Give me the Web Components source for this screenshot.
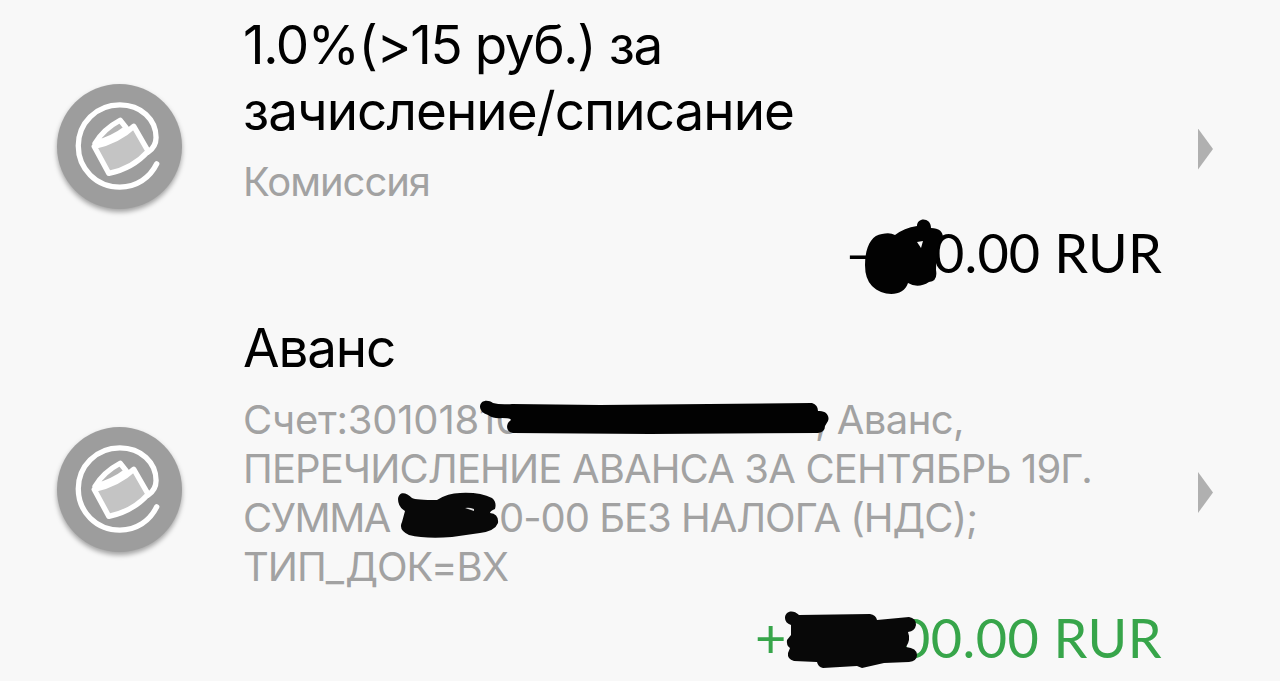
<!DOCTYPE html>
<html lang="ru">
<head>
<meta charset="utf-8">
<title>Операции</title>
<style>
body {
  margin: 0;
  background: #f8f8f8;
  font-family: Inter, "Liberation Sans", sans-serif;
  overflow: hidden;
}
</style>
</head>
<body>
<operation-list>
  <operation-row>
    <fit-line slot="title" width="419">1.0%(&gt;15 руб.) за</fit-line>
    <fit-line slot="title" width="551">зачисление/списание</fit-line>
    <fit-line slot="details" width="187">Комиссия</fit-line>
    <fit-line slot="amount" width="23">–</fit-line>
    <ink-gap slot="amount" width="65"></ink-gap>
    <fit-line slot="amount" width="229">0.00 RUR</fit-line>
  </operation-row>
  <operation-row income style="--title-gap: 14px">
    <fit-line slot="title" width="152">Аванс</fit-line>
    <text-line slot="details">
      <fit-line width="236">Счет:301018</fit-line>
      <fit-line width="42">10</fit-line>
      <ink-gap width="294"></ink-gap>
      <fit-line width="149">, Аванс,</fit-line>
    </text-line>
    <fit-line slot="details" width="849">ПЕРЕЧИСЛЕНИЕ АВАНСА ЗА СЕНТЯБРЬ 19Г.</fit-line>
    <text-line slot="details">
      <fit-line width="147">СУММА</fit-line>
      <ink-gap width="109"></ink-gap>
      <fit-line width="478">0-00 БЕЗ НАЛОГА (НДС);</fit-line>
    </text-line>
    <fit-line slot="details" width="265">ТИП_ДОК=ВХ</fit-line>
    <fit-line slot="amount" width="34">+</fit-line>
    <ink-gap slot="amount" width="110"></ink-gap>
    <fit-line slot="amount" width="263">00.00 RUR</fit-line>
  </operation-row>
  <ink-strokes slot="overlay"></ink-strokes>
</operation-list>

<script>
const attach = (el, css, html) => {
  const shadow = el.attachShadow({ mode: "open" });
  shadow.innerHTML = `<style>${css}</style>${html}`;
  return shadow;
}

class OperationList extends HTMLElement {
  connectedCallback() {
    attach(this, `
:host {
  display: flex;
  flex-direction: column;
  gap: 10px;
  position: relative;
  width: 1280px;
  height: 681px;
  overflow: hidden;
}
`, `<slot></slot><slot name="overlay"></slot>`);
  }
}

class OperationRow extends HTMLElement {
  connectedCallback() {
    attach(this, `
:host {
  display: grid;
  grid-template-columns: 243px 919px 1fr;
  align-items: center;
  color: #000;
  --amount: #000;
}
:host([income]) {
  --amount: #37a54a;
}
wallet-icon {
  margin-left: 57px;
}
.body {
  display: flex;
  flex-direction: column;
  padding: 12px 0 6px;
}
.title {
  display: flex;
  flex-direction: column;
  font-size: 53px;
  line-height: 66px;
}
:host([income]) .title {
  padding-top: 1px;
}
.details {
  display: flex;
  flex-direction: column;
  margin-top: var(--title-gap, 13px);
  font-size: 40px;
  line-height: 49px;
  color: #a2a2a2;
}
.amount {
  display: flex;
  justify-content: flex-end;
  margin-top: 14px;
  font-family: Lato, Inter, sans-serif;
  font-size: 54px;
  line-height: 66px;
  color: var(--amount);
}
.arrow {
  width: 15px;
  height: 41px;
  margin: 6px 0 0 36px;
  background: #b0b0b0;
  clip-path: polygon(0 0, 100% 50%, 0 100%);
}
`, `
<wallet-icon></wallet-icon>
<div class="body">
  <div class="title"><slot name="title"></slot></div>
  <div class="details"><slot name="details"></slot></div>
  <div class="amount"><slot name="amount"></slot></div>
</div>
<div class="arrow"></div>
`);
  }
}

class TextLine extends HTMLElement {
  connectedCallback() {
    attach(this, `:host { display: flex; }`, `<slot></slot>`);
  }
}

// one line of text, tracked so that it fills the given width
class FitLine extends HTMLElement {
  connectedCallback() {
    const shadow = attach(this, `
:host { display: block; flex: none; white-space: pre; }
span { display: inline-block; }
`, `<span><slot></slot></span>`);
    const width = Number(this.getAttribute("width"));
    const span = shadow.querySelector("span");
    const natural = span.getBoundingClientRect().width;
    span.style.letterSpacing = `${(width - natural) / this.textContent.length}px`;
    this.style.width = `${width}px`;
  }
}

class InkGap extends HTMLElement {
  connectedCallback() {
    attach(this, `:host { display: block; flex: none; }`, ``);
    this.style.width = `${this.getAttribute("width")}px`;
  }
}

class WalletIcon extends HTMLElement {
  connectedCallback() {
    attach(this, `
:host {
  display: block;
  width: 125px;
  height: 125px;
  border-radius: 50%;
  background: #9d9d9d;
  box-shadow: 0 3px 5px rgb(0 0 0 / .35);
}
svg { display: block; }
`, `
<svg width="125" height="125" viewBox="51 40 376 376" fill="none" stroke="#fff" stroke-width="16" stroke-linecap="round" stroke-linejoin="round">
  <path d="M165 219Q190 176 241 149L260 173Q220 204 165 219Z" fill="#b5b5b5"/>
  <path d="M163 228Q237 210 282 167L325 242Q280 293 207 309Z" fill="#c4c4c4"/>
  <path d="M351 280C330 323 290 350 240 350C169 350 115 295 115 226C115 158 169 103 240 103C304 103 349 147 349 201C349 220 341 234 325 245"/>
</svg>
`);
  }
}

class InkStrokes extends HTMLElement {
  connectedCallback() {
    attach(this, `
:host {
  position: absolute;
  inset: 0;
  pointer-events: none;
}
svg { display: block; }
`, `
<svg width="1280" height="681" viewBox="0 0 1280 681" fill="#020202">
  <path d="M865 265C865 248 871 235 882 234Q890 232 895 235Q904 228 917 226C917 217 931 217 931 228Q943 228 943 238Q937 242 937 256Q936 265 936 270Q938 281 929 282Q918 289 908 283C904 297 883 297 872 286Q865 279 865 265Z"/>
  <path d="M917 242l6-1-2 7z" fill="#f8f8f8"/>
  <path d="M480 407C480 400 488 399 493 403Q500 405 512 404L600 405L812 403Q818 405 818 411C826 410 830 416 828 421L825 426Q825 432 818 433L650 434L513 433C506 432 505 424 511 420Q511 418 502 418Q494 419 488 415Q480 412 480 407Z"/>
  <path d="M398 499C399 491 406 492 412 498Q416 500 437 500Q448 493 460 493Q480 492 492 498Q497 502 495 509Q490 511 490 513Q499 514 498 523Q495 531 480 533L452 537Q425 539 409 535Q398 530 402 522L405 511Q398 507 398 499Z" fill="#080808"/>
  <path d="M465 508q4-1 9 1v2z" fill="#dddddd"/>
  <path d="M785 618C785 611 793 609 799 615L870 614Q876 615 877 620L909 617Q916 618 916 625Q915 631 908 632Q911 640 906 647Q917 648 917 655Q917 661 909 662L884 663L862 668L857 666L823 668Q818 667 817 662L794 661Q787 659 788 653L790 648Q786 645 787 640L791 635L791 625Q785 623 785 618Z" fill="#080808"/>
</svg>
`);
  }
}

customElements.define("operation-list", OperationList);
customElements.define("operation-row", OperationRow);
customElements.define("text-line", TextLine);
customElements.define("fit-line", FitLine);
customElements.define("ink-gap", InkGap);
customElements.define("wallet-icon", WalletIcon);
customElements.define("ink-strokes", InkStrokes);
</script>
</body>
</html>
